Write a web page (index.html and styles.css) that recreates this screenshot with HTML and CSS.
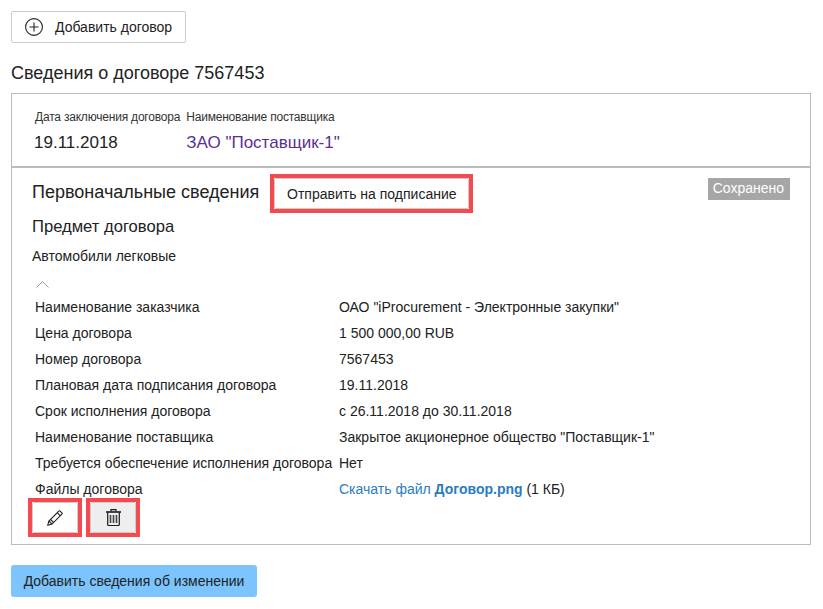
FILE: index.html
```html
<!DOCTYPE html>
<html lang="ru">
<head>
    <meta charset="UTF-8">
    <title>Сведения о договоре</title>
    <link rel="stylesheet" href="styles.css">
</head>
<body>
    <button class="button add-contract">
        <svg class="plus-icon" width="20" height="20" viewBox="0 0 20 20" fill="none" stroke="#222" stroke-width="1.1">
            <circle cx="10" cy="10" r="8.4"/>
            <path d="M10 5.5v9M5.5 10h9"/>
        </svg>
        Добавить договор
    </button>

    <h1 class="page-title">Сведения о договоре 7567453</h1>

    <div class="card">
        <div class="summary">
            <div class="summary-col date-col">
                <div class="summary-label">Дата заключения договора</div>
                <div class="summary-value">19.11.2018</div>
            </div>
            <div class="summary-col">
                <div class="summary-label">Наименование поставщика</div>
                <div class="summary-value supplier">ЗАО "Поставщик-1"</div>
            </div>
        </div>

        <div class="details">
            <div class="details-head">
                <h2 class="section-title head-title">Первоначальные сведения</h2>
                <div class="marker send-marker">
                    <button class="button send">Отправить на подписание</button>
                </div>
                <span class="saved">Сохранено</span>
            </div>

            <h3 class="subject-title">Предмет договора</h3>
            <div class="subject">Автомобили легковые</div>

            <svg class="collapse" width="13" height="8" viewBox="0 0 13 8" fill="none" stroke="#999">
                <path d="M.5 7.500l6-6 6 6"/>
            </svg>

            <div class="fields">
                <div>Наименование заказчика</div>
                <div>ОАО "iProcurement - Электронные закупки"</div>
                <div>Цена договора</div>
                <div>1 500 000,00 RUB</div>
                <div>Номер договора</div>
                <div>7567453</div>
                <div>Плановая дата подписания договора</div>
                <div>19.11.2018</div>
                <div>Срок исполнения договора</div>
                <div>с 26.11.2018 до 30.11.2018</div>
                <div>Наименование поставщика</div>
                <div>Закрытое акционерное общество "Поставщик-1"</div>
                <div>Требуется обеспечение исполнения договора</div>
                <div>Нет</div>
                <div>Файлы договора</div>
                <div><a class="file-link" href="#">Скачать файл <b>Договор.png</b></a> (1 КБ)</div>
            </div>

            <div class="actions">
                <div class="marker">
                    <button class="button icon-button">
                        <svg width="16" height="16" viewBox="0 0 16 16" fill="none" stroke="#222" stroke-width="1.100">
                            <path d="M.8 15.200 1.900 11 11.800 1.100a1 1 0 0 1 1.400 0l1.700 1.700a1 1 0 0 1 0 1.400L5 14.100z"/>
                            <path d="M1.900 11 5 14.100M10.200 2.700l3.100 3.100M3.500 9.400l3.100 3.100"/>
                        </svg>
                    </button>
                </div>
                <div class="marker">
                    <button class="button icon-button delete">
                        <svg width="15" height="17" viewBox="0 0 15 17" fill="none" stroke="#1a1a1a">
                            <path d="M0 3h15" stroke-width="1.600"/>
                            <path d="M5 2.500V.6h5v1.900M1.700 3.500v12a1 1 0 0 0 1 1h9.600a1 1 0 0 0 1-1v-12" stroke-width="1.200"/>
                            <path d="M4.500 6v8M7.500 6v8M10.500 6v8" stroke-width="1.600" stroke="#444"/>
                        </svg>
                    </button>
                </div>
            </div>
        </div>
    </div>

    <button class="button add-change">Добавить сведения об изменении</button>
</body>
</html>
```

FILE: styles.css
```css
body {
    margin: 0;
    padding: 11px 12px 0 11px;
    font-family: "Liberation Sans", Arial, sans-serif;
    font-size: 14px;
    color: #222;
    background-color: #fff;
}

.button {
    font-family: inherit;
    font-size: 14px;
    color: #222;
    background-color: #fff;
    border: 1px solid #ccc;
    border-radius: 2px;
    padding: 0;
    cursor: pointer;
}

.add-contract {
    display: flex;
    align-items: center;
    gap: 11px;
    width: 175px;
    height: 32px;
    padding-left: 12px;
}

.page-title {
    margin: 19px 0 9px;
    font-size: 18px;
    line-height: 22px;
    font-weight: normal;
    color: #222;
}

.card {
    border: 1px solid #bbb;
}

.summary {
    display: flex;
    height: 72px;
    padding-left: 23px;
    border-bottom: 2px solid #bbb;
}

.date-col {
    margin-right: 6px;
}

.summary-label {
    margin-top: 16px;
    font-size: 12px;
    line-height: 14px;
    letter-spacing: -0.2px;
    color: #333;
}

.summary-value {
    margin-top: 9px;
    margin-left: -1px;
    font-size: 17px;
    line-height: 20px;
}

.supplier {
    margin-left: 0;
    color: #5b2f91;
}

.details {
    padding: 0 20px 7px;
}

.details-head {
    display: flex;
    align-items: flex-start;
    padding-top: 6px;
}

.section-title {
    margin: 0;
    font-size: 18px;
    line-height: 28px;
    font-weight: normal;
    color: #222;
}

.head-title {
    margin-top: 4px;
}

/* red frames drawn on the screenshot */
.marker {
    display: flex;
    flex: none;
    border: 4px solid #f44a4f;
}

.send-marker {
    margin-left: 11px;
}

.send {
    width: 195px;
    height: 31px;
}

.saved {
    margin-left: auto;
    margin-top: 4px;
    padding: 0 6px 0 5px;
    height: 22px;
    line-height: 21px;
    background-color: #a6a6a6;
    color: #fff;
}

.subject-title {
    margin: 3px 0 0;
    font-size: 16.6px;
    line-height: 22px;
    font-weight: normal;
    color: #222;
}

.subject {
    margin-top: 8px;
    line-height: 20px;
}

.collapse {
    display: block;
    margin: 14px 0 0 4px;
}

.fields {
    display: grid;
    grid-template-columns: 304px 1fr;
    grid-auto-rows: 26px;
    margin-top: 6px;
    padding-left: 3px;
    line-height: 26px;
}

.file-link {
    color: #2a7cc0;
    text-decoration: none;
}

.actions {
    display: flex;
    gap: 4px;
    margin: -4px 0 0 -4px;
}

.icon-button {
    display: flex;
    align-items: center;
    justify-content: center;
    width: 46px;
    height: 31px;
}

.icon-button.delete {
    background-color: #eee;
}

.add-change {
    display: block;
    width: 246px;
    height: 32px;
    margin-top: 20px;
    border: none;
    border-radius: 3px;
    background-color: #7cc4fd;
}
```
